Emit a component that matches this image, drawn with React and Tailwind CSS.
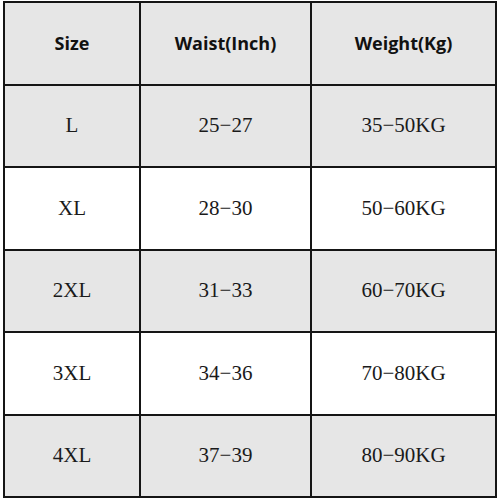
const header = ["Size", "Waist(Inch)", "Weight(Kg)"];

const rows = [
  { size: "L", waist: "25−27", weight: "35−50KG" },
  { size: "XL", waist: "28−30", weight: "50−60KG" },
  { size: "2XL", waist: "31−33", weight: "60−70KG" },
  { size: "3XL", waist: "34−36", weight: "70−80KG" },
  { size: "4XL", waist: "37−39", weight: "80−90KG" },
];

function Cell({ children, shaded, head }) {
  return (
    <div
      className={`flex items-center justify-center ${
        shaded ? "bg-[#e6e6e6]" : "bg-white"
      } ${
        head
          ? "font-['Open_Sans',sans-serif] text-[18px] font-bold text-[#111]"
          : "font-['Liberation_Serif',serif] text-[21px] text-[#1a1a1a]"
      }`}
    >
      {children}
    </div>
  );
}

export default function App() {
  return (
    <div className="h-[500px] w-[500px] bg-white pl-[3px] pt-[1px]">
      <div className="grid h-[497px] w-[494px] grid-cols-[134px_169px_1fr] grid-rows-6 gap-[2px] border-2 border-[#151515] bg-[#151515]">
        {header.map((h) => (
          <Cell key={h} shaded head>
            {h}
          </Cell>
        ))}
        {rows.map((r, i) => {
          const shaded = i % 2 === 0;
          return [
            <Cell key={r.size + "s"} shaded={shaded}>
              {r.size}
            </Cell>,
            <Cell key={r.size + "w"} shaded={shaded}>
              {r.waist}
            </Cell>,
            <Cell key={r.size + "k"} shaded={shaded}>
              {r.weight}
            </Cell>,
          ];
        })}
      </div>
    </div>
  );
}
